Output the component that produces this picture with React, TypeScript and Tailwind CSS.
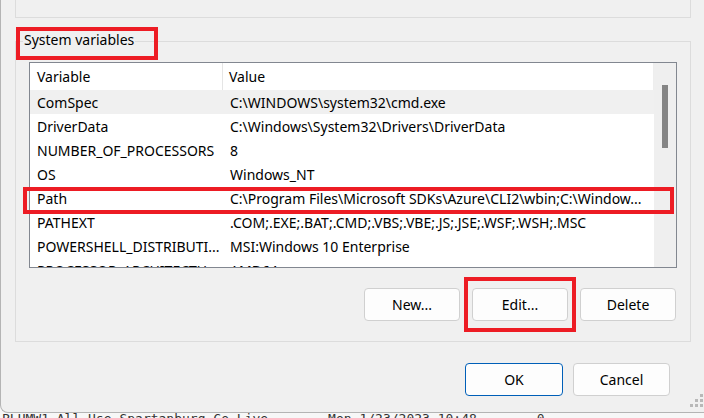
import React from 'react';

const rows: [string, string][] = [
  ['ComSpec', 'C:\\WINDOWS\\system32\\cmd.exe'],
  ['DriverData', 'C:\\Windows\\System32\\Drivers\\DriverData'],
  ['NUMBER_OF_PROCESSORS', '8'],
  ['OS', 'Windows_NT'],
  ['Path', 'C:\\Program Files\\Microsoft SDKs\\Azure\\CLI2\\wbin;C:\\Window...'],
  ['PATHEXT', '.COM;.EXE;.BAT;.CMD;.VBS;.VBE;.JS;.JSE;.WSF;.WSH;.MSC'],
  ['POWERSHELL_DISTRIBUTI...', 'MSI:Windows 10 Enterprise'],
  ['PROCESSOR_ARCHITECTU...', 'AMD64'],
];

function Btn({ label, primary }: { label: string; primary?: boolean }) {
  return (
    <button
      className={
        'h-[33px] rounded-[4px] border bg-[#fdfdfd] text-[14px] text-black ' +
        (primary ? 'w-[98px] border-[#005fb8]' : 'w-[97px] border-[#d0d0d0]')
      }
    >
      {label}
    </button>
  );
}

function Grip() {
  const dots = [
    [10, 0],
    [5, 5], [10, 5],
    [0, 10], [5, 10], [10, 10],
  ];
  return (
    <svg width="14" height="14" viewBox="0 0 14 14" className="absolute right-[1px] bottom-[5px]">
      {dots.map(([x, y], i) => (
        <rect key={i} x={x + 1} y={y + 1} width="3" height="3" fill="#b8b8b8" />
      ))}
    </svg>
  );
}

export default function App() {
  return (
    <div className="relative w-[704px] h-[418px] overflow-hidden bg-[#f7f7f7] font-['Noto_Sans',sans-serif] text-[14px] text-black">
      {/* dialog */}
      <div className="relative h-[413px] bg-[#f0f0f0] border-l border-b border-[#b4b4b4] rounded-bl-[8px] flex flex-col">
        {/* user variables group (cut off at top) */}
        <div className="ml-[14px] w-[676px] h-[18px] border-x border-b border-[#dcdcdc]" />

        {/* system variables group */}
        <div className="relative ml-[14px] mt-[23px] w-[676px] h-[301px] border border-[#dcdcdc]">
          <span className="absolute left-[7px] top-[-12px] px-[1px] bg-[#f0f0f0] leading-[20px]">
            System variables
          </span>

          <div className="mt-[20px] ml-[13px] w-[648px] h-[206px] border border-[#828790] bg-white flex overflow-hidden">
            <div className="flex-1 flex flex-col">
              <div className="h-[27px] flex shrink-0 border-r border-[#eeeeee]">
                <div className="w-[193px] pl-[7px] flex items-center border-r border-[#e5e5e5]">Variable</div>
                <div className="flex-1 pl-[6px] flex items-center">Value</div>
              </div>
              {rows.map(([name, value], i) => (
                <div
                  key={name}
                  className={'h-[24px] flex shrink-0 whitespace-nowrap ' + (i === 0 ? 'bg-[#f0f0f0]' : '')}
                >
                  <div className="w-[193px] pl-[7px] flex items-center">{name}</div>
                  <div className="flex-1 pl-[7px] flex items-center">{value}</div>
                </div>
              ))}
            </div>
            <div className="w-[22px] shrink-0 bg-[#efefef] pt-[22px] flex justify-center">
              <div className="w-[6px] h-[63px] bg-[#858585]" />
            </div>
          </div>

          <div className="mt-[20px] pr-[14px] flex justify-end gap-[12px]">
            <button className="w-[96px] h-[33px] rounded-[4px] border border-[#d0d0d0] bg-[#fdfdfd]">New...</button>
            <button className="w-[96px] h-[33px] rounded-[4px] border border-[#d0d0d0] bg-[#fdfdfd]">Edit...</button>
            <button className="w-[96px] h-[33px] rounded-[4px] border border-[#d0d0d0] bg-[#fdfdfd]">Delete</button>
          </div>
        </div>

        <div className="mt-[21px] pr-[34px] flex justify-end gap-[10px]">
          <Btn label="OK" primary />
          <Btn label="Cancel" />
        </div>

        <Grip />
      </div>

      {/* window behind the dialog */}
      <div className="h-[5px] overflow-hidden flex gap-[60px] pl-[2px] text-[13px] leading-[14px] text-[#333] font-['DejaVu_Sans_Mono',monospace] whitespace-nowrap">
        <span className="-mt-[1px]">PLUMW1 All Use Spartanburg Co Live</span>
        <span className="-mt-[1px]">Mon 1/23/2023 10:48</span>
        <span className="-mt-[1px]">0</span>
      </div>

      {/* annotation boxes */}
      <div className="absolute left-[16px] top-[27px] w-[142px] h-[33px] border-[4px] border-[#ed1c24]" />
      <div className="absolute left-[23px] top-[187px] w-[651px] h-[27px] border-[4px] border-[#ed1c24]" />
      <div className="absolute left-[464px] top-[277px] w-[112px] h-[55px] border-[4px] border-[#ed1c24]" />
    </div>
  );
}
